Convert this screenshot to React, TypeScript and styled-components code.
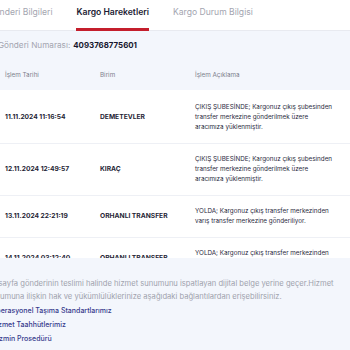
import styled, { createGlobalStyle } from 'styled-components'

const GlobalStyle = createGlobalStyle`
  body {
    margin: 0;
    background: #ffffff;
    font-family: Inter, "Open Sans", "DejaVu Sans", sans-serif;
    overflow: hidden;
  }
`

const tabs = [
  { text: 'Gönderi Bilgileri', active: false },
  { text: 'Kargo Hareketleri', active: true },
  { text: 'Kargo Durum Bilgisi', active: false },
]

const movements = [
  {
    date: '11.11.2024 11:16:54',
    unit: 'DEMETEVLER',
    lines: ['ÇIKIŞ ŞUBESİNDE; Kargonuz çıkış şubesinden', 'transfer merkezine gönderilmek üzere', 'aracımıza yüklenmiştir.'],
  },
  {
    date: '12.11.2024 12:49:57',
    unit: 'KIRAÇ',
    lines: ['ÇIKIŞ ŞUBESİNDE; Kargonuz çıkış şubesinden', 'transfer merkezine gönderilmek üzere', 'aracımıza yüklenmiştir.'],
  },
  {
    date: '13.11.2024 22:21:19',
    unit: 'ORHANLI TRANSFER',
    lines: ['YOLDA; Kargonuz çıkış transfer merkezinden', 'varış transfer merkezine gönderiliyor.'],
  },
  {
    date: '14.11.2024 03:12:40',
    unit: 'ORHANLI TRANSFER',
    lines: ['YOLDA; Kargonuz çıkış transfer merkezinden', 'varış transfer merkezine gönderiliyor.'],
  },
]

const links = ['Operasyonel Taşıma Standartlarımız', 'Hizmet Taahhütlerimiz', 'Tazmin Prosedürü']

export default function App() {
  return (
    <>
      <GlobalStyle />
      <StyledPage>
        <StyledTabBar>
          {tabs.map((tab) => (
            <StyledTab key={tab.text} $active={tab.active}>
              {tab.text}
            </StyledTab>
          ))}
        </StyledTabBar>

        <StyledInfo>
          <StyledLabel>Gönderi Numarası:</StyledLabel>
          <StyledNumber>4093768775601</StyledNumber>
        </StyledInfo>

        <StyledTable>
          <StyledHeadRow>
            <span>İşlem Tarihi</span>
            <span>Birim</span>
            <span>İşlem Açıklama</span>
          </StyledHeadRow>
          {movements.map((m, i) => (
            <StyledRow key={i} $first={i === 0}>
              <StyledStrong>{m.date}</StyledStrong>
              <StyledStrong>{m.unit}</StyledStrong>
              <StyledDesc>
                {m.lines.map((line, j) => (
                  <span key={j}>{line}</span>
                ))}
              </StyledDesc>
            </StyledRow>
          ))}
        </StyledTable>

        <StyledFooter>
          <StyledNote>
            Bu sayfa gönderinin teslimi halinde hizmet sunumunu ispatlayan dijital belge yerine geçer.Hizmet
            <br />
            sunumuna ilişkin hak ve yükümlülüklerinize aşağıdaki bağlantılardan erişebilirsiniz.
          </StyledNote>
          <StyledLinks>
            {links.map((link) => (
              <StyledLink key={link} href="#">
                {link}
              </StyledLink>
            ))}
          </StyledLinks>
        </StyledFooter>
      </StyledPage>
    </>
  )
}

const StyledPage = styled.div`
  width: 380px;
  height: 350px;
  margin-left: -20px;
  display: flex;
  flex-direction: column;
  overflow: hidden;

  & > * {
    flex-shrink: 0;
  }
`

const StyledTabBar = styled.div`
  display: flex;
  gap: 24px;
  height: 30px;
  padding-left: 8px;
  border-bottom: 1px solid #e8eaf0;
  background: #ffffff;
`

const StyledTab = styled.div<{ $active: boolean }>`
  display: flex;
  align-items: center;
  padding-bottom: 5px;
  font-size: 8.6px;
  font-weight: ${(p) => (p.$active ? 600 : 400)};
  color: ${(p) => (p.$active ? '#1b1b33' : '#a3a5b0')};
  border-bottom: 3px solid ${(p) => (p.$active ? '#c41e2c' : 'transparent')};
  box-sizing: border-box;
  height: 31px;
  margin-bottom: -1px;
`

const StyledInfo = styled.div`
  display: flex;
  align-items: center;
  gap: 3px;
  height: 28px;
  padding-left: 18px;
  background: #f3f6fc;
  font-size: 8.2px;
`

const StyledLabel = styled.span`
  color: #a3a5b0;
`

const StyledNumber = styled.span`
  color: #17172e;
  font-weight: 700;
  font-size: 7.9px;
`

const StyledTable = styled.div`
  height: 199px;
  overflow: hidden;
  background: #ffffff;
`

const StyledHeadRow = styled.div`
  display: grid;
  grid-template-columns: 95px 95px 1fr;
  align-items: center;
  height: 31px;
  padding-left: 25px;
  background: #f3f6fc;
  font-size: 6.3px;
  color: #7d7f8c;
`

const StyledRow = styled.div<{ $first: boolean }>`
  display: grid;
  grid-template-columns: 95px 95px 1fr;
  align-items: center;
  padding: ${(p) => (p.$first ? '12px' : '10.5px')} 0 10.5px 25px;
  border-bottom: 1px solid #eef0f5;
`

const StyledStrong = styled.span`
  font-size: 6.7px;
  line-height: 10px;
  font-weight: 700;
  color: #1f1f36;
`

const StyledDesc = styled.div`
  display: flex;
  flex-direction: column;
  font-size: 6.3px;
  line-height: 10px;
  color: #2a2a40;
`

const StyledFooter = styled.div`
  flex: 1;
  padding: 19px 0 0 7px;
  background: #f3f6fc;
`

const StyledNote = styled.p`
  margin: 0;
  font-size: 7.6px;
  line-height: 13px;
  color: #a0a2ad;
`

const StyledLinks = styled.div`
  display: flex;
  flex-direction: column;
  gap: 4px;
  margin: 3px 0 0 4px;
`

const StyledLink = styled.a`
  font-size: 7px;
  line-height: 10px;
  font-weight: 500;
  color: #363a8c;
  text-decoration: none;
`
